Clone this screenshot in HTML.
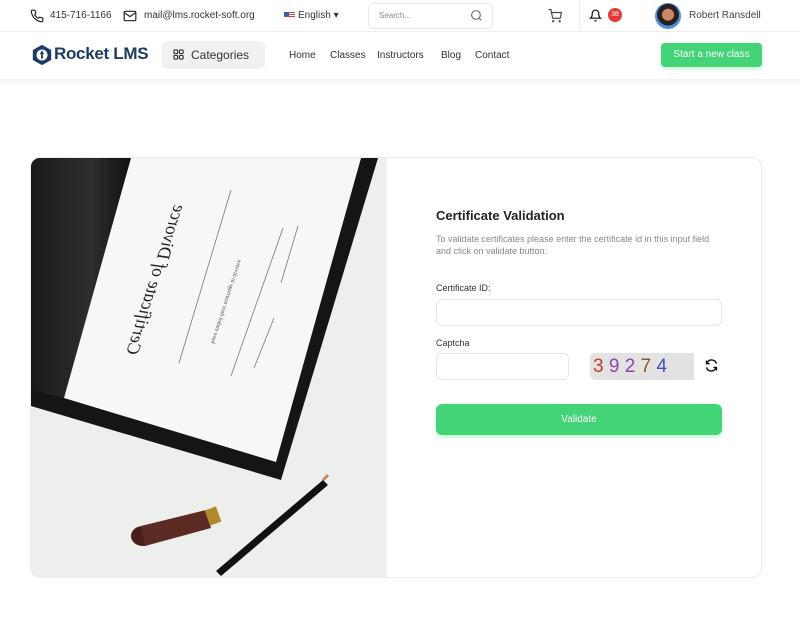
<!DOCTYPE html>
<html><head><meta charset="utf-8"><style>
*{margin:0;padding:0;box-sizing:border-box}
body{width:800px;height:644px;background:#fff;font-family:"Liberation Sans",sans-serif;color:#1f1f1f;position:relative;overflow:hidden}
.a{position:absolute}
.t{font-size:10px;color:#333}
.nav{font-size:10px;color:#333}
</style></head><body>
<!-- top bar -->
<svg class="a" style="left:30px;top:9px" width="14" height="14" viewBox="0 0 24 24" fill="none" stroke="#222" stroke-width="2"><path d="M22 16.9v3a2 2 0 0 1-2.2 2 19.8 19.8 0 0 1-8.6-3.1 19.5 19.5 0 0 1-6-6A19.8 19.8 0 0 1 2.1 4.2 2 2 0 0 1 4.1 2h3a2 2 0 0 1 2 1.7c.1.9.4 1.9.7 2.8a2 2 0 0 1-.5 2.1L8 9.9a16 16 0 0 0 6 6l1.3-1.3a2 2 0 0 1 2.1-.4c.9.3 1.8.6 2.8.7a2 2 0 0 1 1.7 2z"/></svg>
<div class="a t" style="left:50px;top:10px">415-716-1166</div>
<svg class="a" style="left:123px;top:9px" width="14" height="14" viewBox="0 0 24 24" fill="none" stroke="#222" stroke-width="2"><rect x="2" y="4" width="20" height="16" rx="2"/><path d="M2 6l10 7 10-7"/></svg>
<div class="a t" style="left:144px;top:10px">mail@lms.rocket-soft.org</div>
<div class="a" style="left:284px;top:12px;width:11px;height:7px;background:linear-gradient(#c44 0 15%,#fff 15% 30%,#c44 30% 45%,#fff 45% 60%,#c44 60% 75%,#fff 75%)"></div>
<div class="a" style="left:284px;top:12px;width:5px;height:4px;background:#3b5ba8"></div>
<div class="a t" style="left:298px;top:10px">English ▾</div>
<div class="a" style="left:368px;top:3px;width:125px;height:26px;border:1px solid #e8e8e8;border-radius:5px"></div>
<div class="a" style="left:379px;top:11px;font-size:8px;color:#888">Search...</div>
<svg class="a" style="left:470px;top:9px" width="13" height="13" viewBox="0 0 24 24" fill="none" stroke="#666" stroke-width="2"><circle cx="11" cy="11" r="8"/><path d="M21 21l-4-4"/></svg>
<svg class="a" style="left:548px;top:9px" width="14" height="14" viewBox="0 0 24 24" fill="none" stroke="#444" stroke-width="2"><circle cx="9" cy="21" r="1"/><circle cx="20" cy="21" r="1"/><path d="M1 1h4l2.7 13.4a2 2 0 0 0 2 1.6h9.7a2 2 0 0 0 2-1.6L23 6H6"/></svg>
<div class="a" style="left:579px;top:0;width:1px;height:31px;background:#eee"></div>
<svg class="a" style="left:589px;top:9px" width="13" height="13" viewBox="0 0 24 24" fill="none" stroke="#111" stroke-width="2.2"><path d="M18 8A6 6 0 0 0 6 8c0 7-3 9-3 9h18s-3-2-3-9M13.7 21a2 2 0 0 1-3.4 0"/></svg>
<div class="a" style="left:608px;top:8px;width:14px;height:14px;border-radius:50%;background:#e53935;color:#fff;font-size:7px;line-height:14px;text-align:center">38</div>
<div class="a" style="left:655px;top:3px;width:26px;height:26px;border-radius:50%;background:radial-gradient(circle at 50% 45%,#c98a6a 0 30%,#2a2020 32% 55%,#4a90d9 57%)"></div>
<div class="a t" style="left:689px;top:10px;color:#444">Robert Ransdell</div>
<div class="a" style="left:0;top:31px;width:800px;height:1px;background:#eee"></div>
<!-- nav -->
<svg class="a" style="left:31px;top:44px" width="22" height="22" viewBox="0 0 24 24"><path d="M12 1l10 5.5v11L12 23 2 17.5v-11z" fill="#1f3b64"/><circle cx="12" cy="12" r="6" fill="#fff"/><path d="M12 7l2.5 4h-1.5v5h-2v-5H9.5z" fill="#1f3b64"/></svg>
<div class="a" style="left:54px;top:44px;font-size:17px;font-weight:bold;color:#1f3b64;letter-spacing:-0.3px">Rocket LMS</div>
<div class="a" style="left:162px;top:41px;width:103px;height:28px;background:#f1f1f1;border-radius:6px"></div>
<svg class="a" style="left:173px;top:49px" width="11" height="11" viewBox="0 0 12 12" fill="none" stroke="#333" stroke-width="1.3"><rect x="1" y="1" width="4" height="4" rx="1"/><rect x="7" y="1" width="4" height="4" rx="1"/><rect x="1" y="7" width="4" height="4" rx="1"/><rect x="7" y="7" width="4" height="4" rx="1"/></svg>
<div class="a" style="left:191px;top:48px;font-size:12px;color:#333">Categories</div>
<div class="a nav" style="left:289px;top:50px">Home</div>
<div class="a nav" style="left:330px;top:50px">Classes</div>
<div class="a nav" style="left:377px;top:50px">Instructors</div>
<div class="a nav" style="left:441px;top:50px">Blog</div>
<div class="a nav" style="left:475px;top:50px">Contact</div>
<div class="a" style="left:661px;top:43px;width:101px;height:24px;background:#43d477;border-radius:4px;color:#fff;font-size:10px;text-align:center;line-height:24px;box-shadow:0 2px 4px rgba(67,212,119,.3)">Start a new class</div>
<div class="a" style="left:0;top:79px;width:800px;height:6px;background:linear-gradient(#f3f3f3,#fff)"></div>
<!-- card -->
<div class="a" style="left:30px;top:157px;width:732px;height:421px;border:1px solid #ececec;border-radius:10px;overflow:hidden">
<svg class="a" style="left:0;top:0" width="356" height="421" viewBox="0 0 356 421">
<defs><linearGradient id="sp" x1="0" x2="1"><stop offset="0" stop-color="#1a1a1a"/><stop offset=".6" stop-color="#2e2e2e"/><stop offset="1" stop-color="#111"/></linearGradient></defs>
<rect width="356" height="421" fill="#eeeeec"/>
<polygon points="0,0 347,0 250,322 0,248" fill="#151515"/>
<polygon points="0,0 100,0 33,240 0,232" fill="url(#sp)"/>
<polygon points="100,0 330,0 245,304 33,240" fill="#f7f7f5"/>
<g stroke="#777" stroke-width="0.8"><line x1="200" y1="32" x2="148" y2="205"/><line x1="252" y1="70" x2="200" y2="218"/><line x1="243" y1="160" x2="223" y2="210"/><line x1="267" y1="68" x2="250" y2="125"/></g>
<text x="0" y="0" font-family="Liberation Serif" font-style="italic" font-size="18" fill="#222" transform="translate(95,195) rotate(-72) scale(1,-1)">Certificate of Divorce</text>
<text x="0" y="0" font-family="Liberation Serif" font-size="6" fill="#555" transform="translate(180,185) rotate(-72) scale(1,-1)">have ended their marriage in divorce</text>
<ellipse cx="112" cy="378" rx="12" ry="10" fill="#4a1f1a"/>
<polygon points="110,368 175,352 180,370 114,388" fill="#5b2a22"/>
<rect x="176" y="350" width="12" height="16" fill="#b08a2a" transform="rotate(-20 182 358)"/>
<polygon points="185,413 292,322 297,327 190,418" fill="#111"/>
<line x1="292" y1="322" x2="297" y2="317" stroke="#c08860" stroke-width="3"/>
</svg>
<div class="a" style="left:405px;top:50px;font-size:13px;font-weight:bold;color:#222">Certificate Validation</div>
<div class="a" style="left:405px;top:75px;width:285px;font-size:9px;line-height:12px;color:#888">To validate certificates please enter the certificate id in this input field and click on validate button.</div>
<div class="a" style="left:405px;top:125px;font-size:9px;color:#333">Certificate ID:</div>
<div class="a" style="left:405px;top:141px;width:286px;height:27px;border:1px solid #e5e5e5;border-radius:6px"></div>
<div class="a" style="left:405px;top:180px;font-size:9px;color:#333">Captcha</div>
<div class="a" style="left:405px;top:195px;width:133px;height:27px;border:1px solid #e5e5e5;border-radius:6px"></div>
<div class="a" style="left:559px;top:195px;width:104px;height:27px;background:#e2e2e2;border-radius:5px 0 0 5px;font-size:19px;line-height:27px;padding-left:3px;white-space:nowrap;overflow:hidden"><span style="color:#c0392b">3</span>&nbsp;<span style="color:#8e44ad">9</span>&nbsp;<span style="color:#8e44ad">2</span>&nbsp;<span style="color:#8a5a2a">7</span>&nbsp;<span style="color:#3f51b5">4</span></div>
<svg class="a" style="left:673px;top:200px" width="15" height="15" viewBox="0 0 24 24" fill="none" stroke="#111" stroke-width="2.2"><path d="M20 9a8 8 0 0 0-14.5-2L4 9M4 15a8 8 0 0 0 14.5 2L20 15"/><path d="M4 4v5h5M20 20v-5h-5"/></svg>
<div class="a" style="left:405px;top:246px;width:286px;height:31px;background:#43d477;border-radius:6px;color:#fff;font-size:10px;text-align:center;line-height:31px;box-shadow:0 2px 5px rgba(67,212,119,.35)">Validate</div>
</div>
</body></html>
